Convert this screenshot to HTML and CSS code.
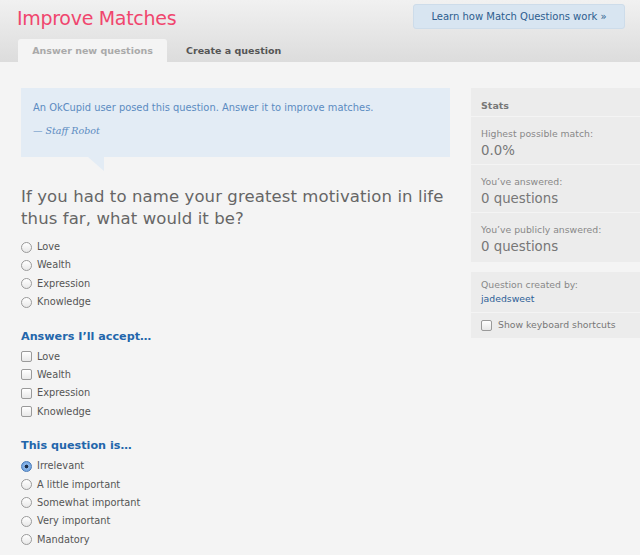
FILE: index.html
```html
<!DOCTYPE html>
<html lang="en">
<head>
  <meta charset="UTF-8">
  <title>Improve Matches</title>
  <link rel="stylesheet" href="styles.css">
</head>
<body>
  <!-- Page header with tabs -->
  <div class="header">
    <div class="header-top">
      <h1 class="page-title">Improve Matches</h1>
      <a class="learn-btn" href="#">Learn how Match Questions work »</a>
    </div>
    <div class="tabs">
      <a class="tab active" href="#">Answer new questions</a>
      <a class="tab" href="#">Create a question</a>
    </div>
  </div>

  <div class="content">
    <div class="main">
      <!-- Notice bubble -->
      <div class="notice">
        <p class="notice-text">An OkCupid user posed this question. Answer it to improve matches.</p>
        <p class="notice-sig">— Staff Robot</p>
      </div>

      <h2 class="question">If you had to name your greatest motivation in life thus far, what would it be?</h2>

      <ul class="options">
        <li><label><input type="radio" name="answer"> Love</label></li>
        <li><label><input type="radio" name="answer"> Wealth</label></li>
        <li><label><input type="radio" name="answer"> Expression</label></li>
        <li><label><input type="radio" name="answer"> Knowledge</label></li>
      </ul>

      <h3 class="section-title">Answers I’ll accept…</h3>
      <ul class="options">
        <li><label><input type="checkbox"> Love</label></li>
        <li><label><input type="checkbox"> Wealth</label></li>
        <li><label><input type="checkbox"> Expression</label></li>
        <li><label><input type="checkbox"> Knowledge</label></li>
      </ul>

      <h3 class="section-title">This question is…</h3>
      <ul class="options">
        <li><label><input type="radio" name="importance" checked> Irrelevant</label></li>
        <li><label><input type="radio" name="importance"> A little important</label></li>
        <li><label><input type="radio" name="importance"> Somewhat important</label></li>
        <li><label><input type="radio" name="importance"> Very important</label></li>
        <li><label><input type="radio" name="importance"> Mandatory</label></li>
      </ul>
    </div>

    <!-- Sidebar -->
    <div class="sidebar">
      <div class="side-box">
        <div class="side-head">Stats</div>
        <div class="side-row">
          <div class="stat-label">Highest possible match:</div>
          <div class="stat-value">0.0%</div>
        </div>
        <div class="side-row">
          <div class="stat-label">You’ve answered:</div>
          <div class="stat-value">0 questions</div>
        </div>
        <div class="side-row">
          <div class="stat-label">You’ve publicly answered:</div>
          <div class="stat-value">0 questions</div>
        </div>
      </div>
      <div class="side-box">
        <div class="side-row creator">
          <div class="stat-label">Question created by:</div>
          <a class="author" href="#">jadedsweet</a>
        </div>
        <div class="side-row shortcuts-row">
          <label class="shortcuts"><input type="checkbox"> Show keyboard shortcuts</label>
        </div>
      </div>
    </div>
  </div>
</body>
</html>
```

FILE: styles.css
```css
body {
  margin: 0;
  background: #f4f4f4;
  font-family: "DejaVu Sans", Verdana, sans-serif;
  color: #555;
}
a {
  text-decoration: none;
}

/* Header */
.header {
  height: 62px;
  background: linear-gradient(#f1f1f1, #dcdcdc);
  display: flex;
  flex-direction: column;
  justify-content: space-between;
}
.header-top {
  display: flex;
  justify-content: space-between;
  align-items: flex-start;
  padding: 4px 15px 0 17px;
}
.page-title {
  margin: 3px 0 0;
  font-size: 19px;
  font-weight: normal;
  color: #f0466e;
  letter-spacing: -0.3px;
}
.learn-btn {
  width: 210px;
  height: 23px;
  line-height: 23px;
  text-align: center;
  background: #d8e5f1;
  border: 1px solid #cddcea;
  border-radius: 3px;
  color: #2d5d8f;
  font-size: 10px;
}
.tabs {
  display: flex;
  padding-left: 18px;
}
.tab {
  display: block;
  height: 23px;
  line-height: 24px;
  margin-left: 19px;
  white-space: nowrap;
  font-size: 9.5px;
  font-weight: bold;
  color: #555;
}
.tab.active {
  width: 149px;
  margin-left: 0;
  text-align: center;
  background: #f4f4f4;
  border-radius: 3px 3px 0 0;
  color: #aaa;
}

/* Layout */
.content {
  display: flex;
  padding: 26px 0 0 21px;
  gap: 21px;
}
.main {
  width: 429px;
}
.sidebar {
  flex: 1;
}

/* Notice bubble */
.notice {
  position: relative;
  background: #e3ecf5;
  padding: 14px 12px 20px;
  margin-bottom: 29px;
}
.notice::after {
  content: "";
  position: absolute;
  left: 67px;
  top: 100%;
  border-top: 14px solid #e3ecf5;
  border-left: 16px solid transparent;
}
.notice-text {
  margin: 0;
  font-size: 9.9px;
  line-height: 12px;
  color: #5b8bc1;
}
.notice-sig {
  margin: 11px 0 0;
  font-family: "DejaVu Serif", Georgia, serif;
  font-style: italic;
  font-size: 9.5px;
  line-height: 12px;
  color: #5b8bc1;
}

.question {
  margin: 0 4px 8px 0;
  font-size: 16.5px;
  letter-spacing: 0.1px;
  font-weight: normal;
  line-height: 22px;
  color: #666;
}

.options {
  list-style: none;
  margin: 0;
  padding: 0;
}
.options li {
  height: 18.4px;
  font-size: 9.8px;
  line-height: 18px;
}
.options label {
  display: flex;
  align-items: center;
  gap: 5px;
  color: #555;
}

.section-title {
  margin: 16px 0 2px;
  font-size: 11.2px;
  font-weight: bold;
  color: #2366ab;
  line-height: 18px;
}

/* Custom inputs */
input[type="radio"],
input[type="checkbox"] {
  appearance: none;
  -webkit-appearance: none;
  margin: 0;
  width: 11px;
  height: 11px;
  border: 1px solid #9a9a9a;
  background: linear-gradient(#fff, #e8e8e8);
  box-sizing: border-box;
  flex-shrink: 0;
}
input[type="radio"] {
  border-radius: 50%;
}
input[type="checkbox"] {
  border-radius: 2px;
}
input[type="radio"]:checked {
  border-color: #4a7bb8;
  background: radial-gradient(circle, #1d2f4a 0 1.6px, #8db8ea 2.2px, #5d95d8 100%);
}

/* Sidebar */
.side-box {
  background: #ececec;
  margin-bottom: 10px;
}
.side-head {
  padding: 12px 10px 4px;
  line-height: 12px;
  font-size: 9.5px;
  font-weight: bold;
  color: #777;
}
.side-row {
  padding: 10px 10px 3px;
  border-top: 1px solid #f4f4f4;
}
.side-row:last-child {
  padding-bottom: 5px;
}
.side-row.creator {
  border-top: none;
  padding: 6px 10px;
}
.side-row.shortcuts-row {
  padding: 5px 10px 6px;
}
.stat-label {
  font-size: 9.3px;
  color: #888;
  line-height: 14px;
}
.stat-value {
  font-size: 13.3px;
  color: #777;
  line-height: 20px;
}
.author {
  display: block;
  font-size: 9.3px;
  color: #2e5f97;
  line-height: 14px;
}
.shortcuts {
  display: flex;
  align-items: center;
  gap: 6px;
  line-height: 14px;
  font-size: 9.3px;
  color: #777;
}
```
